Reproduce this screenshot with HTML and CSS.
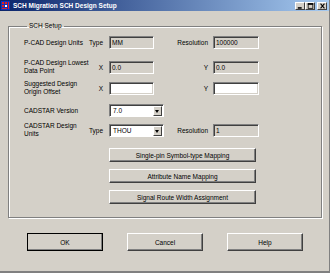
FILE: index.html
```html
<!DOCTYPE html>
<html lang="en">
<head>
    <meta charset="UTF-8">
    <title>SCH Migration SCH Design Setup</title>
    <link rel="stylesheet" href="styles.css">
</head>
<body>
    <div class="window">
        <div class="titlebar">
            <svg class="app-icon" width="9" height="9" viewBox="0 0 9 9">
                <rect width="9" height="9" fill="#1030c0"/>
                <rect x="1" y="1" width="2" height="2" fill="#e02020"/>
                <rect x="4" y="1" width="2" height="2" fill="#e02020"/>
                <rect x="1" y="4" width="2" height="2" fill="#e02020"/>
                <rect x="4" y="4" width="2" height="2" fill="#ffffff"/>
                <rect x="7" y="1" width="1" height="7" fill="#e02020"/>
                <rect x="1" y="7" width="5" height="1" fill="#e02020"/>
            </svg>
            <span class="title">SCH Migration SCH Design Setup</span>
            <div class="controls">
                <span class="ctl"><svg width="9" height="7" viewBox="0 0 9 7"><rect x="1" y="5" width="5" height="2" fill="#000"/></svg></span>
                <span class="ctl"><svg width="9" height="7" viewBox="0 0 9 7"><rect x="1.5" y="0.5" width="6" height="6" fill="none" stroke="#000"/><rect x="1" y="0" width="7" height="2" fill="#000"/></svg></span>
                <span class="ctl close"><svg width="9" height="7" viewBox="0 0 9 7"><path d="M2 0.5 L7 6.5 M7 0.5 L2 6.5" stroke="#000" stroke-width="1.4"/></svg></span>
            </div>
        </div>

        <div class="body">
            <fieldset class="group">
                <legend>SCH Setup</legend>

                <div class="row r1">
                    <div class="lbl">P-CAD Design Units</div>
                    <div class="sub">Type</div>
                    <div class="cell"><div class="field">MM</div></div>
                    <div class="rlbl">Resolution</div>
                    <div class="field wide">100000</div>
                </div>

                <div class="row two r2">
                    <div class="lbl">P-CAD Design Lowest<br>Data Point</div>
                    <div class="sub">X</div>
                    <div class="cell"><div class="field">0.0</div></div>
                    <div class="rlbl">Y</div>
                    <div class="field wide">0.0</div>
                </div>

                <div class="row two r3">
                    <div class="lbl">Suggested Design<br>Origin Offset</div>
                    <div class="sub">X</div>
                    <div class="cell"><div class="field white"></div></div>
                    <div class="rlbl">Y</div>
                    <div class="field wide white"></div>
                </div>

                <div class="row r4">
                    <div class="lbl wider">CADSTAR Version</div>
                    <div class="cell">
                        <div class="select"><span>7.0</span><span class="arrow"></span></div>
                    </div>
                </div>

                <div class="row two r5">
                    <div class="lbl">CADSTAR Design<br>Units</div>
                    <div class="sub">Type</div>
                    <div class="cell">
                        <div class="select"><span>THOU</span><span class="arrow"></span></div>
                    </div>
                    <div class="rlbl">Resolution</div>
                    <div class="field wide">1</div>
                </div>

                <div class="actions">
                    <button class="btn map">Single-pin Symbol-type Mapping</button>
                    <button class="btn map">Attribute Name Mapping</button>
                    <button class="btn map">Signal Route Width Assignment</button>
                </div>
            </fieldset>

            <div class="footer">
                <button class="btn dlg default">OK</button>
                <button class="btn dlg">Cancel</button>
                <button class="btn dlg">Help</button>
            </div>
        </div>
    </div>
</body>
</html>
```

FILE: styles.css
```css
body {
    margin: 0;
    font-family: 'Liberation Sans', Arial, sans-serif;
    font-size: 6.5px;
    color: #000;
    background: #d4d0c8;
}

.window {
    width: 330px;
    height: 273px;
    box-sizing: border-box;
    background: #d4d0c8;
    border-right: 1px solid #808080;
    border-bottom: 2px solid #808080;
    display: flex;
    flex-direction: column;
}

.titlebar {
    height: 11px;
    display: flex;
    align-items: center;
    background: linear-gradient(to right, #0a246a, #a6caf0);
    padding: 0 2px 0 1px;
}

.app-icon {
    margin-right: 3px;
}

.title {
    color: #fff;
    font-weight: bold;
    font-size: 6.5px;
    flex: 1;
}

.controls {
    display: flex;
    align-items: center;
}

.ctl {
    width: 10px;
    height: 8px;
    box-sizing: border-box;
    background: #d4d0c8;
    border-top: 1px solid #fff;
    border-left: 1px solid #fff;
    border-right: 1px solid #404040;
    border-bottom: 1px solid #404040;
    display: flex;
    align-items: center;
    justify-content: center;
    overflow: hidden;
}

.ctl svg {
    width: 7px;
    height: 6px;
}

.ctl.close {
    margin-left: 2px;
}

.body {
    padding: 11px 0 0 8px;
}

.group {
    margin: 0;
    width: 314px;
    height: 196px;
    box-sizing: border-box;
    border: 1px solid #808080;
    box-shadow: 1px 1px 0 #fff, inset 1px 1px 0 #fff;
    padding: 6px 0 0 15px;
}

.group legend {
    padding: 0 2px;
    margin-left: 3px;
    line-height: 8px;
}

.row {
    display: flex;
    align-items: center;
    height: 13px;
}

.row.two {
    height: 16px;
}

.r2 { margin-top: 10px; }
.r3 { margin-top: 5px; }
.r4 { margin-top: 8px; }
.r5 { margin-top: 5px; }

.lbl {
    width: 63px;
    line-height: 8px;
    white-space: nowrap;
}

.lbl.wider {
    width: 85px;
}

.sub {
    width: 16px;
    padding-right: 6px;
    text-align: right;
}

.cell {
    width: 56px;
}

.rlbl {
    width: 48px;
    padding-right: 5px;
    box-sizing: border-box;
    text-align: right;
}

.field {
    width: 45px;
    height: 13px;
    box-sizing: border-box;
    border-top: 1px solid #808080;
    border-left: 1px solid #808080;
    border-right: 1px solid #fff;
    border-bottom: 1px solid #fff;
    box-shadow: inset 1px 1px 0 #404040, inset -1px -1px 0 #d4d0c8;
    padding: 0 2px;
    line-height: 11px;
    background: #d4d0c8;
}

.field.wide {
    width: 46px;
}

.field.white {
    background: #fff;
}

.select {
    width: 55px;
    height: 13px;
    box-sizing: border-box;
    border-top: 1px solid #808080;
    border-left: 1px solid #808080;
    border-right: 1px solid #fff;
    border-bottom: 1px solid #fff;
    box-shadow: inset 1px 1px 0 #404040;
    background: #fff;
    display: flex;
    align-items: center;
    justify-content: space-between;
    padding: 1px 1px 0 3px;
    line-height: 10px;
}

.arrow {
    width: 9px;
    height: 10px;
    box-sizing: border-box;
    background: #d4d0c8;
    border-top: 1px solid #fff;
    border-left: 1px solid #fff;
    border-right: 1px solid #404040;
    border-bottom: 1px solid #404040;
    position: relative;
}

.arrow::after {
    content: "";
    position: absolute;
    left: 1px;
    top: 3px;
    border-left: 2.5px solid transparent;
    border-right: 2.5px solid transparent;
    border-top: 3px solid #000;
}

.actions {
    display: flex;
    flex-direction: column;
    gap: 7px;
    margin: 10px 0 0 85px;
}

.btn {
    font-family: inherit;
    font-size: 6.5px;
    color: #000;
    background: #d4d0c8;
    border-top: 1px solid #fff;
    border-left: 1px solid #fff;
    border-right: 1px solid #404040;
    border-bottom: 1px solid #404040;
    box-shadow: inset -1px -1px 0 #808080;
    padding: 0;
    margin: 0;
}

.btn.map {
    width: 147px;
    height: 14px;
}

.footer {
    display: flex;
    gap: 24px;
    margin: 15px 0 0 19px;
}

.btn.dlg {
    width: 76px;
    height: 18px;
}

.btn.default {
    outline: 1px solid #000;
    outline-offset: -1px;
    border-right-color: #000;
    border-bottom-color: #000;
}
```
